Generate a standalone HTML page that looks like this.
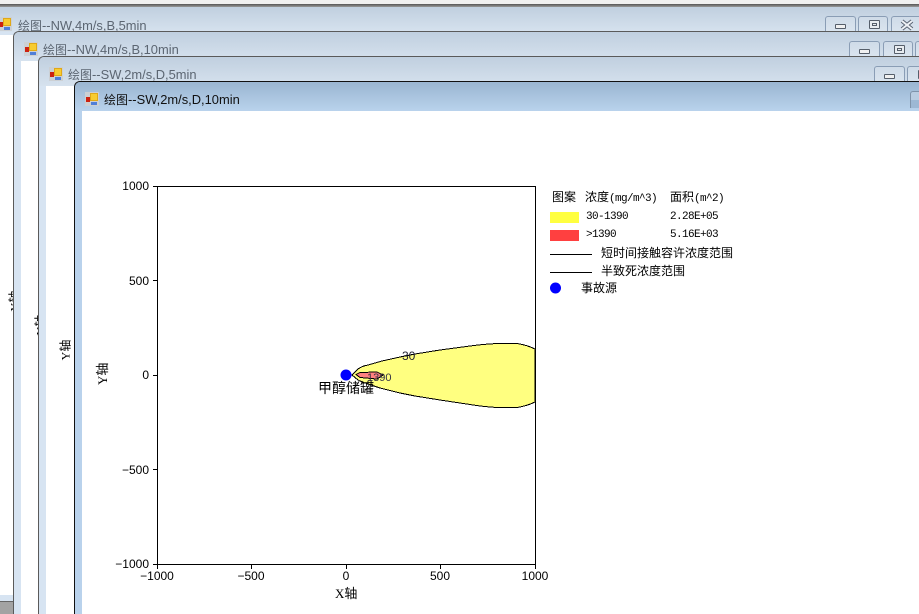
<!DOCTYPE html>
<html><head><meta charset="utf-8">
<style>
html,body{margin:0;padding:0;background:#fff;width:919px;height:614px;overflow:hidden}
#s{position:relative;width:919px;height:614px;overflow:hidden;background:#f0f0f0;font-family:"Liberation Sans","WenQuanYi Zen Hei",sans-serif}
.top{position:absolute;left:0;top:4px;width:919px;height:3px;background:linear-gradient(#555,#999)}
.w{position:absolute;width:950px;overflow:hidden;box-sizing:border-box;border:1px solid #5a5a5a;border-right:0;border-bottom:0;border-top-left-radius:6px;background:#d7e4f2}
.w.a{border-color:#111;background:#b9d2ec}
.tb{position:absolute;left:0;top:0;right:0;height:29px;background:linear-gradient(#c0cfdf,#d6e2ee)}
.a .tb{background:linear-gradient(#9ab5d1,#b9d2ec)}
.c{position:absolute;left:7px;top:29px;right:0;bottom:0;background:#fff}
.t{position:absolute;left:29px;top:10px;font-size:12.9px;line-height:15px;color:#5c6672;white-space:nowrap}
.t span{font-size:12px}
.a .t{color:#111}
.ic{position:absolute;left:10px;top:10px;width:14px;height:14px;background:#ccd0d4}
.ic i{position:absolute;display:block;box-sizing:border-box}
.ic .y{left:5px;top:1px;width:8px;height:8px;background:#f8cc30;border:1px solid #e0a818}
.ic .r{left:1px;top:5px;width:4px;height:5px;background:#cc2211}
.ic .b{left:6px;top:10px;width:6px;height:3px;background:#4f7fd8}
.btn{position:absolute;top:9px;height:17px;box-sizing:border-box;border:1px solid #8a9db5;border-bottom:0;border-radius:3px 3px 0 0;background:linear-gradient(#cfdbe8,#dbe5ef)}
.mn{position:absolute;left:9px;top:7px;width:9px;height:3px;border:1px solid #555e6a;background:#f0f0f0;border-radius:1px}
.mx{position:absolute;left:10px;top:3px;width:9px;height:7px;border:1px solid #555e6a;background:#e8ecf0;border-radius:1px}
.mx:after{content:"";position:absolute;left:2px;top:2px;width:3px;height:1px;border:1px solid #555e6a}
.yl{position:absolute;font-size:12px;line-height:14px;transform:rotate(-90deg);white-space:nowrap;color:#000;font-family:"Liberation Serif","WenQuanYi Zen Hei",serif}
svg{position:absolute;left:0;top:0}
svg text{font-family:"Liberation Sans","WenQuanYi Zen Hei",sans-serif}
.lg{position:absolute;white-space:nowrap;font-size:12px;line-height:14px;color:#000;font-family:"WenQuanYi Zen Hei","Noto Sans CJK SC",sans-serif}
.lg b{font:11px/14px "Liberation Mono",monospace;letter-spacing:-.6px}
</style></head><body>
<div id="s">
<div class="top"></div>

<div class="w" style="left:-9px;top:7px;height:607px;border:0;border-radius:0">
  <div class="tb" style="height:25px"></div>
  <div class="c" style="top:28px;left:0"></div>
  <div class="ic" style="left:7px;top:10px"><i class="y"></i><i class="r"></i><i class="b"></i></div>
  <div class="t" style="left:27px;top:11px"><span>绘图</span>--NW,4m/s,B,5min</div>
  <div class="btn" style="left:834px;width:31px"><span class="mn"></span></div>
  <div class="btn" style="left:867px;width:30px"><span class="mx"></span></div>
  <div class="btn" style="left:900px;width:31px"><svg width="14" height="12" viewBox="0 0 14 12" style="left:8px;top:2px"><path d="M2 2L12 10M12 2L2 10" stroke="#596372" stroke-width="4" fill="none"/><path d="M2 2L12 10M12 2L2 10" stroke="#eef1f5" stroke-width="2" fill="none"/></svg></div>
  <div class="yl" style="left:13px;top:287px">Y轴</div>
</div>
<div style="position:absolute;left:0;top:595px;width:13px;height:6px;background:#d7e4f2"></div>
<div style="position:absolute;left:0;top:601px;width:13px;height:13px;background:#a3a3a3;border-top:1px solid #666;box-sizing:border-box"></div>

<div class="w" style="left:13px;top:31px;height:583px">
  <div class="tb"></div><div class="c"></div>
  <div class="ic"><i class="y"></i><i class="r"></i><i class="b"></i></div>
  <div class="t"><span>绘图</span>--NW,4m/s,B,10min</div>
  <div class="btn" style="left:835px;width:31px"><span class="mn"></span></div>
  <div class="btn" style="left:869px;width:30px"><span class="mx"></span></div>
  <div class="btn" style="left:901px;width:31px"></div>
  <div class="yl" style="left:16px;top:286px">Y轴</div>
</div>

<div class="w" style="left:38px;top:56px;height:558px">
  <div class="tb"></div><div class="c"></div>
  <div class="ic"><i class="y"></i><i class="r"></i><i class="b"></i></div>
  <div class="t"><span>绘图</span>--SW,2m/s,D,5min</div>
  <div class="btn" style="left:835px;width:31px"><span class="mn"></span></div>
  <div class="btn" style="left:868px;width:31px"><span class="mx"></span></div>
  <div class="yl" style="left:16px;top:286px">Y轴</div>
</div>

<div class="w a" style="left:74px;top:81px;height:533px">
  <div class="tb"></div><div class="c"></div>
  <div class="ic"><i class="y"></i><i class="r"></i><i class="b"></i></div>
  <div class="t"><span>绘图</span>--SW,2m/s,D,10min</div>
  <div class="btn" style="left:835px;width:31px;border-color:#7f93aa;background:linear-gradient(#b9cde2 50%,#9db8d4 50%)"></div>
</div>

<svg width="919" height="614" viewBox="0 0 919 614">
  <g shape-rendering="crispEdges" stroke="#000" stroke-width="1" fill="none">
    <rect x="157.5" y="186.5" width="378" height="378"/>
    <path d="M153 186.5H157M153 280.5H157M153 375.5H157M153 469.5H157M153 564.5H157M157.5 564V569M251.5 564V569M346.5 564V569M440.5 564V569M535.5 564V569"/>
  </g>
  <path shape-rendering="crispEdges" d="M352 375L358 369Q362 366 368 365L382 361L400 357L415 354L440 350L470 346Q485 344 498 343.500L517 343.500Q527 345 535 349V402Q527 406 517 407.500L498 407.500Q485 407 470 404.500L440 400L415 396L400 393L380 388L368 384Q362 382 358 380Z" fill="#ffff80" stroke="#000" stroke-width="1"/>
  <path shape-rendering="crispEdges" d="M356 374.500L360 372.500L377 372L383 375L377 379L360 377.500Z" fill="#ff8080" stroke="#000" stroke-width="1"/>
  <path d="M535.5 186V564" stroke="#000" stroke-width="1" shape-rendering="crispEdges"/>
  <circle cx="346" cy="375" r="5.5" fill="#0000ff"/>
  <text x="402" y="360" font-size="12" fill="#223">30</text>
  <text x="367" y="381" font-size="11" fill="#334">1390</text>
  <g font-size="12" fill="#000">
    <text x="149" y="190" text-anchor="end">1000</text>
    <text x="149" y="285" text-anchor="end">500</text>
    <text x="149" y="379" text-anchor="end">0</text>
    <text x="149" y="474" text-anchor="end">−500</text>
    <text x="149" y="568" text-anchor="end">−1000</text>
    <text x="157" y="580" text-anchor="middle">−1000</text>
    <text x="251" y="580" text-anchor="middle">−500</text>
    <text x="346" y="580" text-anchor="middle">0</text>
    <text x="440" y="580" text-anchor="middle">500</text>
    <text x="535" y="580" text-anchor="middle">1000</text>
  </g>
  <text x="318" y="393" font-size="14" fill="#000">甲醇储罐</text>
  <text x="335" y="598" font-size="13" fill="#000" style="font-family:'Liberation Serif','WenQuanYi Zen Hei',serif">X轴</text>
  <text transform="translate(107,385) rotate(-90)" font-size="13" fill="#000" style="font-family:'Liberation Serif','WenQuanYi Zen Hei',serif">Y轴</text>
  <rect x="550" y="212" width="29" height="11" fill="#ffff40"/>
  <rect x="550" y="230" width="29" height="11" fill="#ff4040"/>
  <g shape-rendering="crispEdges" stroke="#000"><path d="M550 254.500H592M550 272.500H592"/></g>
  <circle cx="555.500" cy="288" r="5.500" fill="#0000ff"/>
</svg>

<div class="lg" style="left:552px;top:190px">图案</div>
<div class="lg" style="left:585px;top:190px">浓度<b>(mg/m^3)</b></div>
<div class="lg" style="left:670px;top:190px">面积<b>(m^2)</b></div>
<div class="lg" style="left:586px;top:208px"><b>30-1390</b></div>
<div class="lg" style="left:670px;top:208px"><b>2.28E+05</b></div>
<div class="lg" style="left:586px;top:226px"><b>&gt;1390</b></div>
<div class="lg" style="left:670px;top:226px"><b>5.16E+03</b></div>
<div class="lg" style="left:601px;top:246px">短时间接触容许浓度范围</div>
<div class="lg" style="left:601px;top:264px">半致死浓度范围</div>
<div class="lg" style="left:581px;top:281px">事故源</div>
</div>
</body></html>
